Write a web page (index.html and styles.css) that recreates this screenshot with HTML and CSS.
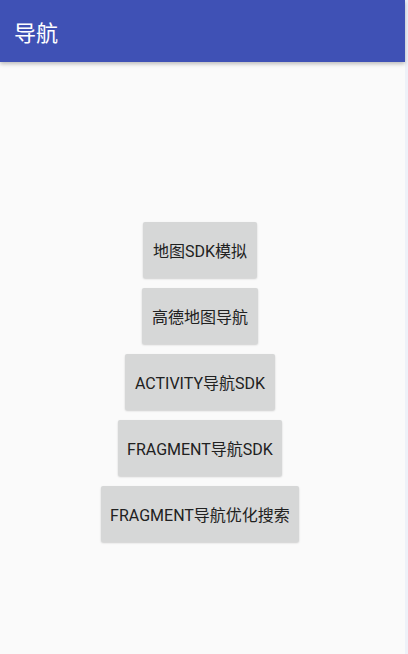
FILE: index.html
```html
<!DOCTYPE html>
<html>
<head>
	<meta charset="utf-8">
	<meta name="viewport" content="width=device-width, initial-scale=1">
	<title>导航</title>
	<link rel="stylesheet" href="styles.css">
</head>
<body>
	<div class="screen">
		<div class="app-bar">
			<span class="app-title">导航</span>
		</div>
		<div class="btn-list">
			<button class="nav-btn">地图SDK模拟</button>
			<button class="nav-btn">高德地图导航</button>
			<button class="nav-btn">ACTIVITY导航SDK</button>
			<button class="nav-btn">FRAGMENT导航SDK</button>
			<button class="nav-btn">FRAGMENT导航优化搜索</button>
		</div>
	</div>
	<div class="edge"></div>
</body>
</html>
```

FILE: styles.css
```css
html, body{
	margin: 0;
	height: 100%;
}
body{
	display: flex;
	background: #fafafa;
	font-family: Roboto, "Noto Sans CJK SC", sans-serif;
}
.screen{
	flex: 1;
	display: flex;
	flex-direction: column;
}
.app-bar{
	height: 62px;
	background: #3f51b5;
	box-shadow: 0 2px 4px rgba(0, 0, 0, 0.25);
	display: flex;
	align-items: center;
	padding-left: 14px;
	position: relative;
}
.app-title{
	color: #fff;
	font-size: 22px;
}
.btn-list{
	display: flex;
	flex-direction: column;
	align-items: center;
	gap: 10px;
	padding-top: 160px;
	padding-right: 5px;
}
.nav-btn{
	height: 56px;
	padding: 0 9.5px;
	border: none;
	border-radius: 2px;
	background: #d6d7d7;
	color: #212121;
	font-family: Roboto, "Noto Sans CJK SC", sans-serif;
	font-size: 16px;
	box-shadow: 0 1px 2px rgba(0, 0, 0, 0.18);
}
.edge{
	width: 3px;
	background: #eef1f8;
}
```
